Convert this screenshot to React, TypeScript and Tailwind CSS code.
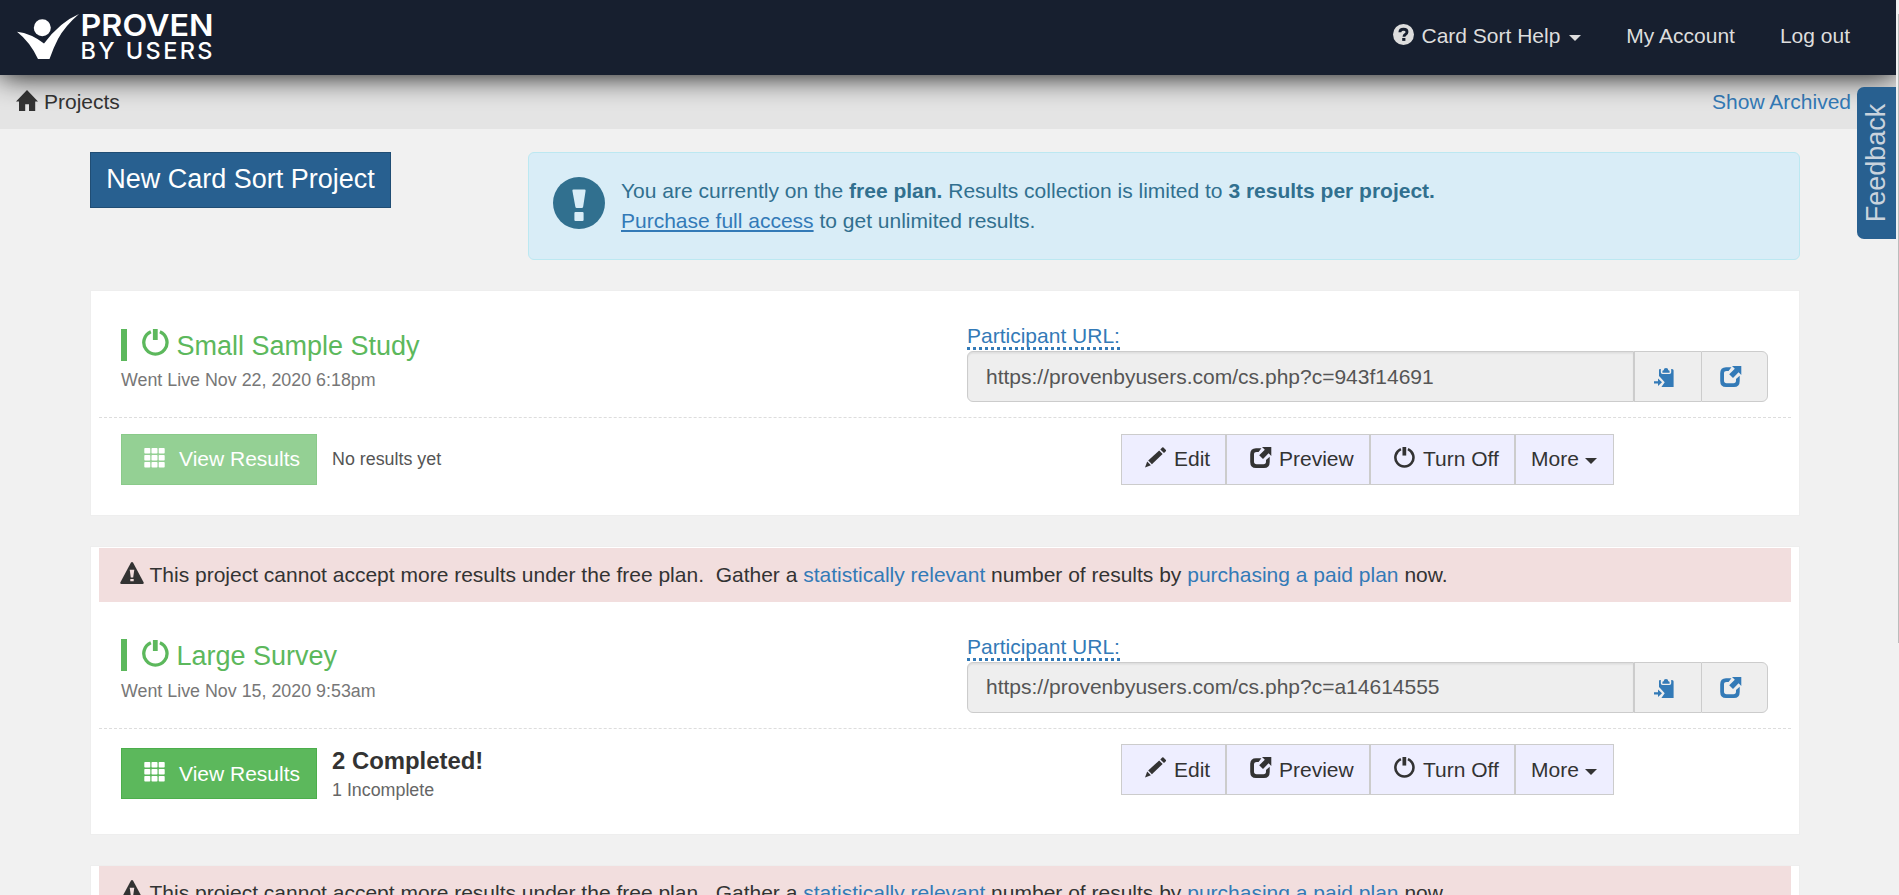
import React from "react";

type IconProps = { className?: string };

function PowerIcon({ className }: IconProps) {
  return (
    <svg viewBox="0 0 27 27" className={className} fill="none" stroke="currentColor">
      <path d="M8.900 2.800A11.600 11.600 0 1 0 17.900 2.800" strokeWidth="3.3" />
      <path d="M13.300 0V11" strokeWidth="4.8" />
    </svg>
  );
}

function GridIcon({ className }: IconProps) {
  return (
    <svg viewBox="0 0 21 20" className={className} fill="currentColor">
      {[0, 7, 14].map((y) =>
        [0.3, 7.5, 14.7].map((x) => <rect key={`${x}-${y}`} x={x} y={y} width="6" height="5.6" rx="0.8" />),
      )}
    </svg>
  );
}

function PencilIcon({ className }: IconProps) {
  return (
    <svg viewBox="0 0 22 21" className={className} fill="currentColor">
      <path d="M0 20.6L2.2 14.6L5.9 18.3Z" />
      <path d="M3.2 13.6L14.2 3.4L17.6 6.9L6.9 17.3Z" />
      <path d="M15.3 2.4L17.2 .6Q17.8 0 18.5 .6L20.9 3Q21.4 3.6 20.8 4.2L19 6Z" />
    </svg>
  );
}

function ShareIcon({ className }: IconProps) {
  return (
    <svg viewBox="0 0 22 21" className={className} fill="currentColor">
      <path d="M11.4 1.3L8.6 4.9H6.6Q4 4.9 4 7.3V14.6Q4 17.2 6.6 17.2H13.5Q16 17.2 16 14.6V13L19.7 9.8V15Q19.7 21 14 21H6Q.2 21 .2 15V7.3Q.2 1.3 6 1.3Z" />
      <path d="M12 0H21.3V9L18.6 6.3L13 11.9L9.2 8.3L14.8 2.8Z" />
    </svg>
  );
}

function PasteIcon({ className }: IconProps) {
  return (
    <svg viewBox="0 0 20 19" className={className} fill="currentColor">
      <path d="M5 2Q5 1 6 1H6.8V4.3Q6.8 6 8.5 6H15.5Q17.2 6 17.2 4.3V1H18Q19.6 1 19.6 2.6V19H7.4L10.7 14.3L6.7 9.8L5 8Z" />
      <path d="M8.4 4.8V3.2Q8.4 2.3 9.7 2.3Q9.8 0 12 0Q14.2 0 14.3 2.3Q15.6 2.3 15.6 3.2V4.8Z" />
      <path d="M0 13.3H4V10.6L8 14.3L4 18V15.4H0Z" />
    </svg>
  );
}

function HomeIcon({ className }: IconProps) {
  return (
    <svg viewBox="0 0 22 21" className={className} fill="currentColor">
      <path d="M11 0L22 11.4H19.2V21H13V14.2H9.2V21H3V11.4H0Z" />
    </svg>
  );
}

function WarningIcon({ className }: IconProps) {
  return (
    <svg viewBox="0 0 24 22" className={className}>
      <path d="M11 .6Q12 -.4 13 .6L23.7 20.4Q24 22 22.6 22H1.4Q0 22 .3 20.4Z" fill="currentColor" />
      <path d="M9.7 7.8H14.3L13.2 15.4H10.8ZM10.3 17H13.7V19.2H10.3Z" fill="#f2dede" />
    </svg>
  );
}

function QuestionIcon({ className }: IconProps) {
  return (
    <svg viewBox="0 0 21 21" className={className}>
      <circle cx="10.5" cy="10.5" r="10.5" fill="currentColor" />
      <path d="M6.9 8.2Q7 5.3 10.5 5.3Q14 5.3 14 8Q14 9.4 12.3 10.5Q11 11.3 11 12.7" fill="none" stroke="#171f2f" strokeWidth="2.9" />
      <rect x="9.2" y="14" width="3.2" height="2.9" fill="#171f2f" />
    </svg>
  );
}

function AlertIcon({ className }: IconProps) {
  return (
    <svg viewBox="0 0 52 52" className={className}>
      <circle cx="26" cy="26" r="26" fill="currentColor" />
      <path d="M20.5 12.5H31.5Q32.8 12.5 32.6 13.8L30.2 29.5Q30 31 28.7 31H23.8Q22.5 31 22.3 29.5L19.4 13.8Q19.2 12.5 20.5 12.5ZM22.4 35H29.5Q30.6 35 30.6 36V43Q30.6 44 29.5 44H22.4Q21.4 44 21.4 43V36Q21.4 35 22.4 35Z" fill="#d9edf7" />
    </svg>
  );
}

function Caret({ className }: IconProps) {
  return (
    <svg viewBox="0 0 12 6" className={className} fill="currentColor">
      <path d="M0 0H12L6 6Z" />
    </svg>
  );
}

function Logo() {
  return (
    <div className="flex h-[46px] w-[196px] text-white">
      <svg viewBox="0 0 62 46" className="h-[46px] w-[62px] shrink-0" fill="currentColor">
        <circle cx="25.3" cy="13.8" r="8.5" />
        <path d="M0 17.8Q14 19.5 27 29.5Q43 8 62 0Q48 12 41 25Q36.5 33.5 32.5 45H21Q13 28 0 17.8Z" />
      </svg>
      <svg viewBox="0 0 132 46" className="h-[46px] w-[132px] overflow-visible" fill="currentColor">
        <text x="1.5" y="21.7" textLength="133" lengthAdjust="spacingAndGlyphs" className="font-['Inter'] text-[29.5px] font-semibold">PROVEN</text>
        <text x="1.5" y="44.6" textLength="132" lengthAdjust="spacing" className="font-['Inter'] text-[23.5px] font-medium">BY USERS</text>
      </svg>
    </div>
  );
}

type Project = { name: string; live: string; url: string; limited: boolean; completed?: string; incomplete?: string };

const projects: Project[] = [
  { name: "Small Sample Study", live: "Went Live Nov 22, 2020 6:18pm", url: "https://provenbyusers.com/cs.php?c=943f14691", limited: false },
  { name: "Large Survey", live: "Went Live Nov 15, 2020 9:53am", url: "https://provenbyusers.com/cs.php?c=a14614555", limited: true, completed: "2 Completed!", incomplete: "1 Incomplete" },
];

function LimitBanner() {
  return (
    <div className="mx-2 flex h-[54px] shrink-0 items-center bg-[#f2dede] pl-[21px] whitespace-pre">
      <WarningIcon className="-mt-1 mr-[5.5px] h-[22px] w-6" />
      <p>
        This project cannot accept more results under the free plan.{"\u00a0 "}Gather a <a className="text-[#337ab7]">statistically relevant</a> number of results by{" "}
        <a className="text-[#337ab7]">purchasing a paid plan</a> now.
      </p>
    </div>
  );
}

function ProjectCard({ project }: { project: Project }) {
  const { limited } = project;
  const textShift = limited ? "pb-0" : "pb-[2px]";
  const iconShift = limited ? "mt-[-4px]" : "mt-[-2px]";
  return (
    <section className={`mt-[30px] flex flex-col border border-[#eee] bg-white ${limited ? "h-[289px] pt-px" : "h-[226px]"}`}>
      {limited && <LimitBanner />}
      <div className="mx-2 flex h-[127px] shrink-0 justify-between border-b border-dashed border-[#ddd] pr-[23px] pl-[22px]">
        <div className={limited ? "pt-[37px]" : "pt-[38px]"}>
          <h2 className="flex h-8 items-start border-l-[6px] border-[#5cb85c] pl-[15px] text-[27px] leading-8 text-[#5cb85c]">
            <PowerIcon className={limited ? "mt-px mr-[7.5px] h-[27px] w-[27px]" : "mr-[7.5px] h-[27px] w-[27px]"} />
            <span className="mt-px">{project.name}</span>
          </h2>
          <p className={`text-[17.85px] leading-[25px] text-[#777] ${limited ? "mt-[8px]" : "mt-[7px]"}`}>{project.live}</p>
        </div>
        <div className="w-[801px] pt-[30px]">
          <div className="flex h-[30px]">
            <a className="flex flex-col leading-[30px] text-[#337ab7]">
              <span className="h-[26px]">Participant URL:</span>
              <span className="h-[3px] bg-[repeating-linear-gradient(90deg,#337ab7_0_3px,transparent_3px_6px)]" />
            </a>
          </div>
          <div className="flex h-[51px] text-[#555]">
            <div className={`flex w-[667px] items-center rounded-l-md border border-[#ccc] bg-[#eee] pl-[18px] shadow-[inset_0_1.5px_1.5px_rgba(0,0,0,0.075)] ${limited ? "pb-[2px]" : "pb-0"}`}>{project.url}</div>
            <div className="w-[67px] border-y border-l border-[#ccc] bg-[#eee] pt-[16px] pl-[19px]">
              <PasteIcon className="h-[19px] w-5 text-[#337ab7]" />
            </div>
            <div className="w-[67px] rounded-r-md border border-[#ccc] bg-[#eee] pt-[14px] pl-[18px]">
              <ShareIcon className="h-[21px] w-[22px] text-[#337ab7]" />
            </div>
          </div>
        </div>
      </div>
      <div className="flex justify-between pr-[185px] pl-[30px]">
        <div className={`flex ${limited ? "pt-[19px]" : "pt-4"}`}>
          <button className={`flex h-[51px] w-[196px] items-center border border-[#4cae4c] bg-[#5cb85c] pl-[22px] text-white ${textShift} ${limited ? "" : "opacity-65"}`}>
            <GridIcon className={`mr-[14px] h-5 w-[21px] ${limited ? "mt-[-3px]" : "mt-[-1px]"}`} />
            <span>View Results</span>
          </button>
          {limited ? (
            <div className="ml-[15px]">
              <p className="text-[23.9px] leading-[26px] font-bold text-[#333]">{project.completed}</p>
              <p className="mt-[4px] text-[17.85px] leading-[25px] text-[#666]">{project.incomplete}</p>
            </div>
          ) : (
            <p className="ml-[15px] text-[17.85px] leading-[50px] text-[#555]">No results yet</p>
          )}
        </div>
        <div className={`flex ${limited ? "pt-[15px]" : "pt-4"}`}>
          <button className={`flex h-[51px] w-[105px] items-center border border-[#ccc] bg-[#eef] pl-[23px] ${textShift}`}>
            <PencilIcon className={`mr-[7px] h-[21px] w-[22px] ${iconShift}`} />
            <span>Edit</span>
          </button>
          <button className={`flex h-[51px] w-[144px] items-center border border-[#ccc] bg-[#eef] pl-[23px] ${textShift}`}>
            <ShareIcon className={`mr-[7px] h-[21px] w-[22px] ${iconShift}`} />
            <span>Preview</span>
          </button>
          <button className={`flex h-[51px] w-[145px] items-center border border-[#ccc] bg-[#eef] pl-[23px] ${textShift}`}>
            <PowerIcon className={`mr-[8px] h-[21px] w-[21px] ${iconShift}`} />
            <span>Turn Off</span>
          </button>
          <button className={`flex h-[51px] w-[99px] items-center border border-[#ccc] bg-[#eef] pl-[15px] ${textShift}`}>
            <span>More</span>
            <Caret className="mt-[4px] ml-[6px] h-[6px] w-3" />
          </button>
        </div>
      </div>
    </section>
  );
}

export default function App() {
  return (
    <div className="relative flex h-[895px] w-[1899px] overflow-hidden bg-[#f1f1f1] font-['Liberation_Sans',Arial,sans-serif] text-[21px] leading-[30px] text-[#333]">
      <div className="w-[1896px] shrink-0 overflow-hidden">
        <header className="relative z-10 flex h-[75px] justify-between bg-[#171f2f] pt-[14px] pr-[46px] pl-[17px] text-[#ddd] shadow-[0_0_30px_#000]">
          <Logo />
          <nav className="mt-[7px] flex h-[30px] items-center gap-[45px]">
            <a className="flex items-center">
              <QuestionIcon className="mt-[-3px] mr-[7px] h-[21px] w-[21px]" />
              Card Sort Help
              <Caret className="mt-[3px] ml-[9px] h-[6px] w-3" />
            </a>
            <a>My Account</a>
            <a>Log out</a>
          </nav>
        </header>
        <div className="flex h-[54px] justify-between bg-[#e4e4e4] pt-[12px] pr-[45px] pl-4">
          <a className="flex">
            <HomeIcon className="mt-[3px] mr-[6px] h-[21px] w-[22px]" />
            Projects
          </a>
          <a className="text-[#337ab7]">Show Archived</a>
        </div>
        <main className="pt-[23px] pr-[96px] pl-[90px]">
          <div className="flex items-start justify-between">
            <button className="h-14 w-[301px] border border-[#204d74] bg-[#286090] pb-[3px] text-[27px] leading-[38px] text-white">New Card Sort Project</button>
            <div className="flex h-[108px] w-[1272px] rounded-md border border-[#bce8f1] bg-[#d9edf7] pt-[23px] pl-6 text-[#31708f]">
              <AlertIcon className="mt-px mr-4 h-[52px] w-[52px]" />
              <p>
                You are currently on the <b>free plan.</b> Results collection is limited to <b>3 results per project.</b>
                <br />
                <a className="text-[#337ab7] underline decoration-2 underline-offset-[2px] [text-decoration-skip-ink:none]">Purchase full access</a> to get unlimited results.
              </p>
            </div>
          </div>
          {projects.map((p) => (
            <ProjectCard key={p.name} project={p} />
          ))}
          <section className="mt-[30px] h-[289px] border border-[#eee] bg-white">
            <LimitBanner />
          </section>
        </main>
      </div>
      <div className="absolute top-[87px] left-[1857px] z-20 flex h-[152px] w-[39px] items-center justify-center rounded-l-[7px] bg-[#286090]">
        <span className="-rotate-90 text-[27px] text-[#c9d3dd]">Feedback</span>
      </div>
      <div className="flex w-[3px] shrink-0 justify-end bg-[#f1f1f1] pt-[14px]">
        <div className="h-[629px] w-px bg-[#bcbcbc]" />
      </div>
    </div>
  );
}
